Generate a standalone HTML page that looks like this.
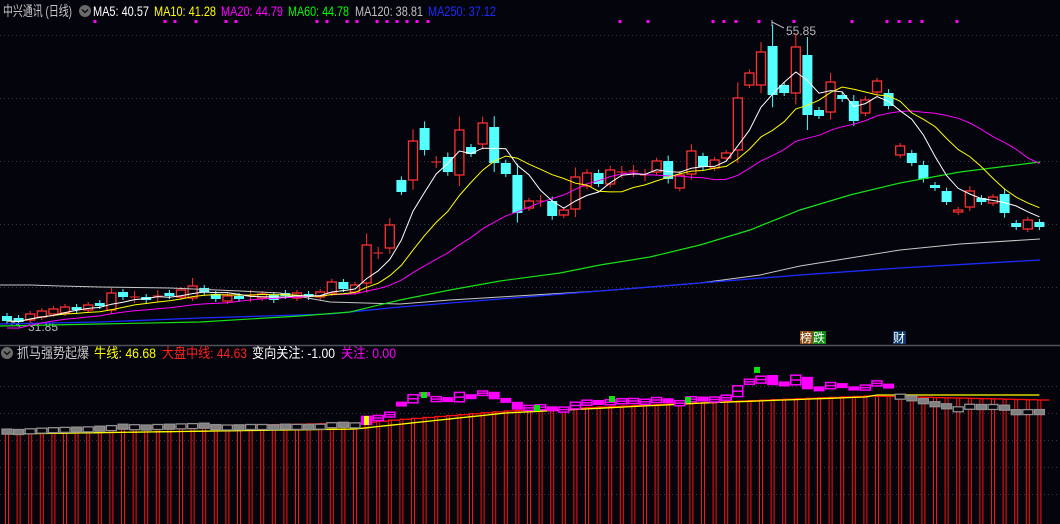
<!DOCTYPE html>
<html><head><meta charset="utf-8">
<style>
html,body{margin:0;padding:0;background:#04040c;width:1060px;height:524px;overflow:hidden}
svg{position:absolute;left:0;top:0}
.t{font-family:"Liberation Sans","Noto Sans CJK SC",sans-serif;font-size:14px}
</style></head><body>
<svg id="s" width="1060" height="524" xmlns="http://www.w3.org/2000/svg">
<rect width="1060" height="524" fill="#04040c"/>
<g id="grid" stroke="#3a3a44" stroke-dasharray="1,3" stroke-width="1">
<line x1="0" y1="35.5" x2="1060" y2="35.5"/><line x1="0" y1="98.5" x2="1060" y2="98.5"/>
<line x1="0" y1="161.5" x2="1060" y2="161.5"/><line x1="0" y1="224.5" x2="1060" y2="224.5"/>
<line x1="0" y1="287.5" x2="1060" y2="287.5"/>
<line x1="0" y1="386.5" x2="1060" y2="386.5"/><line x1="0" y1="413.5" x2="1060" y2="413.5"/>
<line x1="0" y1="440.5" x2="1060" y2="440.5"/><line x1="0" y1="467.5" x2="1060" y2="467.5"/>
<line x1="0" y1="494.5" x2="1060" y2="494.5"/>
</g>
<line x1="0" y1="345.5" x2="1060" y2="345.5" stroke="#50505a" stroke-width="1.5"/>
<g class="t">
<text x="3" y="16" fill="#c8c8c8" textLength="69" lengthAdjust="spacingAndGlyphs">中兴通讯 (日线)</text>
<circle cx="85" cy="11" r="6" fill="#6a6a6a"/><path d="M82 9.5 L85 12.5 L88 9.5" stroke="#111" stroke-width="1.5" fill="none"/>
<text x="93" y="16" fill="#ffffff" textLength="56" lengthAdjust="spacingAndGlyphs">MA5: 40.57</text>
<text x="154" y="16" fill="#ffff00" textLength="62" lengthAdjust="spacingAndGlyphs">MA10: 41.28</text>
<text x="221" y="16" fill="#ff00ff" textLength="62" lengthAdjust="spacingAndGlyphs">MA20: 44.79</text>
<text x="288" y="16" fill="#00ff00" textLength="61" lengthAdjust="spacingAndGlyphs">MA60: 44.78</text>
<text x="355" y="16" fill="#c0c0c0" textLength="68" lengthAdjust="spacingAndGlyphs">MA120: 38.81</text>
<text x="428" y="16" fill="#1c2cff" textLength="68" lengthAdjust="spacingAndGlyphs">MA250: 37.12</text>
<circle cx="7" cy="353" r="6" fill="#6a6a6a"/><path d="M4 351.5 L7 354.5 L10 351.5" stroke="#111" stroke-width="1.5" fill="none"/>
<text x="17" y="358" fill="#c8c8c8" textLength="72" lengthAdjust="spacingAndGlyphs">抓马强势起爆</text>
<text x="94" y="358" fill="#ffff00" textLength="62" lengthAdjust="spacingAndGlyphs">牛线: 46.68</text>
<text x="162" y="358" fill="#ff2020" textLength="85" lengthAdjust="spacingAndGlyphs">大盘中线: 44.63</text>
<text x="252" y="358" fill="#ffffff" textLength="83" lengthAdjust="spacingAndGlyphs">变向关注: -1.00</text>
<text x="341" y="358" fill="#ff00ff" textLength="55" lengthAdjust="spacingAndGlyphs">关注: 0.00</text>
<text x="786" y="35" fill="#b8b8b8" font-size="12">55.85</text>
<text x="28" y="331" fill="#b8b8b8" font-size="12">31.85</text>
</g>
<path d="M772 20 L772 26 M772 22 L784 28" stroke="#b8b8b8" fill="none"/>
<path d="M12 321 L20 327 M12 321 l0 4 M12 321 l4 0" stroke="#b8b8b8" fill="none"/>
<rect x="800" y="331" width="13" height="13" fill="#8a4a10"/><rect x="813" y="331" width="13" height="13" fill="#0a8a10"/>
<rect x="893" y="331" width="13" height="13" fill="#0c3a6c"/>
<g class="t" font-size="12"><text x="800" y="342" fill="#fff" font-size="12">榜</text><text x="813" y="342" fill="#fff" font-size="12">跌</text><text x="893" y="342" fill="#fff" font-size="12">财</text></g>
<g id="g"></g>
</svg>
<script>
var D=[['c',316,321],['c',318,322],['r',314,320],['r',311,317],['r',309,314],['r',307,313],['c',307,310],['r',305,310],['c',303,306],['r',293,310],
['c',292,297],['x',297],['c',297,300],['x',296],['c',293,296],['r',290,297],['r',286,298,278],['c',288,292],['c',294,299],['r',296,301],
['c',296,299],['x',296],['r',294,298],['c',295,300],['c',293,296],['r',293,298],['c',294,297],['r',292,297],['r',282,293],['c',282,289],
['r',285,292],['r',245,283],['x',253],['r',225,248],['c',180,192],['r',141,180],['c',128,150],['x',162],['c',157,172],['r',130,175],
['c',147,154],['r',123,144],['c',127,163],['c',163,174],['c',175,213],['r',201,208],['x',201],['c',201,216],['r',210,215],['r',177,209],
['r',173,186],['c',173,184],['r',170,184],['x',172],['x',171],['x',175],['r',161,172],['c',161,179],['r',175,188],['r',151,174],
['c',156,167],['r',160,168],['r',153,158],['r',98,150],['r',73,85],['r',52,85],['c',46,95,25],['c',85,93],['r',47,93],['c',55,115],
['c',110,116],['r',82,112],['c',95,99],['c',101,121],['r',100,113],['r',81,92],['c',93,106],['r',146,155],['c',153,163],['c',165,179],
['c',185,188],['c',191,202],['r',210,212],['r',191,207],['c',198,202],['r',197,203],['c',194,213],['c',223,227],['r',220,229],['c',222,227]];
var h='';function X(i){return 7+11.6*i}
var C=[];
D.forEach(function(d,i){var x=X(i),t=d[0];
 if(t=='x'){var y=d[1];C.push(y);h+='<line x1="'+(x-5)+'" y1="'+y+'" x2="'+(x+5)+'" y2="'+y+'" stroke="#ff3030"/><line x1="'+x+'" y1="'+(y-6)+'" x2="'+x+'" y2="'+(y+6)+'" stroke="#ff3030"/>';return}
 var a=d[1],b=d[2],hi=d[3]||a-Math.max(3,(b-a)*0.3),lo=b+Math.max(3,(b-a)*0.25);
 C.push(t=='r'?a:b);
 if(t=='r'){h+='<line x1="'+x+'" y1="'+hi+'" x2="'+x+'" y2="'+lo+'" stroke="#ff3030"/><rect x="'+(x-4.5)+'" y="'+a+'" width="9" height="'+Math.max(1,b-a)+'" fill="#04040c" stroke="#ff3030" stroke-width="1.3"/>';}
 else{h+='<line x1="'+x+'" y1="'+hi+'" x2="'+x+'" y2="'+lo+'" stroke="#54ffff"/><rect x="'+(x-5)+'" y="'+a+'" width="10" height="'+Math.max(2,b-a)+'" fill="#54ffff"/>';}
});
function ma(n,col){var p=[];for(var i=0;i<C.length;i++){var s=0,k=0;for(var j=Math.max(0,i-n+1);j<=i;j++){s+=C[j];k++}
 var v=s/k;if(n==20&&i<20)v+= (20-i)*0.35;p.push(X(i).toFixed(1)+','+v.toFixed(1))}
 h+='<polyline points="'+p.join(' ')+'" fill="none" stroke="'+col+'" stroke-width="1"/>';}
h+='<polyline points="0,285 30,285 60,286 100,287 170,288 240,291 280,293 330,302 400,304 450,300 500,297 600,291 700,283 760,275 800,266 850,258 900,250 960,244 1040,239" fill="none" stroke="#c8c8c8"/>';
h+='<polyline points="0,324 100,322 200,318 330,314 400,307 500,299 600,291 700,283 800,275 900,268 1040,260" fill="none" stroke="#1c2cff" stroke-width="1.3"/>';
h+='<polyline points="0,326 100,324 200,322 300,316 350,312 400,300 450,290 500,281 560,273 600,265 650,257 700,245 750,230 800,210 850,195 900,183 960,172 1040,162" fill="none" stroke="#18e018" stroke-width="1.2"/>';
ma(20,'#ff00ff');ma(10,'#ffff00');ma(5,'#ffffff');
[95,165,175,196,226,236,317,327,347,357,377,387,397,407,417,428,620,648,713,724,736,759,794,852,887,899,910,922,957].forEach(function(x){h+='<rect x="'+(x-1.5)+'" y="20" width="3" height="3" fill="#ff00ff"/>'});
function lerp(pts,i){for(var k=1;k<pts.length;k++){if(i<=pts[k][0]){var a=pts[k-1],b=pts[k];return a[1]+(b[1]-a[1])*(i-a[0])/(b[0]-a[0])}}return pts[pts.length-1][1]}
var TP=[[0,430],[30,423],[43,411],[61,402],[74,396],[89,400]];
var YP=[[0,434],[30,429],[43,413],[60,403],[74,397],[75,395],[89,395]];
var yl=[];
D.forEach(function(d,i){var x=X(i),t=lerp(TP,i);
 h+='<rect x="'+(x-1.5)+'" y="'+t.toFixed(1)+'" width="3" height="'+(524-t+2)+'" fill="none" stroke="#ff1010" stroke-width="1"/>';
 h+='<line x1="'+(x-1.5)+'" y1="'+t.toFixed(1)+'" x2="'+(x+10)+'" y2="'+t.toFixed(1)+'" stroke="#ff1010" stroke-width="1.3"/>';
 yl.push(x.toFixed(1)+','+lerp(YP,i).toFixed(1));
});
h+='<polyline points="'+yl.join(' ')+'" fill="none" stroke="#ffff00" stroke-width="1.3"/>';
D.forEach(function(d,i){var x=X(i),a,b;
 if(d[0]=='x'){a=d[1]-2;b=d[1]+2}else{a=d[1];b=d[2]}
 var ya=365.4+0.208*a,yb=365.4+0.208*b;if(yb-ya<4){var m=(ya+yb)/2;ya=m-2.5;yb=m+2.5}
 var mag=(i>=31&&i<=76);
 if(mag){ if(d[0]=='c')h+='<rect x="'+(x-5.5)+'" y="'+ya.toFixed(1)+'" width="11" height="'+(yb-ya).toFixed(1)+'" fill="#ff00ff"/>';
  else h+='<rect x="'+(x-5)+'" y="'+ya.toFixed(1)+'" width="10" height="'+(yb-ya).toFixed(1)+'" fill="#04040c" stroke="#ff00ff" stroke-width="1.5"/><line x1="'+(x-5)+'" y1="'+((ya+yb)/2).toFixed(1)+'" x2="'+(x+5)+'" y2="'+((ya+yb)/2).toFixed(1)+'" stroke="#ff00ff" stroke-width="1.5"/>';}
 else h+='<rect x="'+(x-5)+'" y="'+ya.toFixed(1)+'" width="10" height="'+(yb-ya).toFixed(1)+'" fill="'+(d[0]=='c'?'#808080':'#04040c')+'" stroke="#909090" stroke-width="1.3"/>';
});
h+='<rect x="361" y="416" width="11" height="9" fill="#ff00ff"/><rect x="364" y="416" width="5" height="9" fill="#ffff00"/>';
[[424,392],[537,405],[688,397],[757,367],[612,396]].forEach(function(p){h+='<rect x="'+(p[0]-3)+'" y="'+p[1]+'" width="6" height="6" fill="#10e010"/>'});
document.getElementById('g').innerHTML=h;
</script>
</body></html>
